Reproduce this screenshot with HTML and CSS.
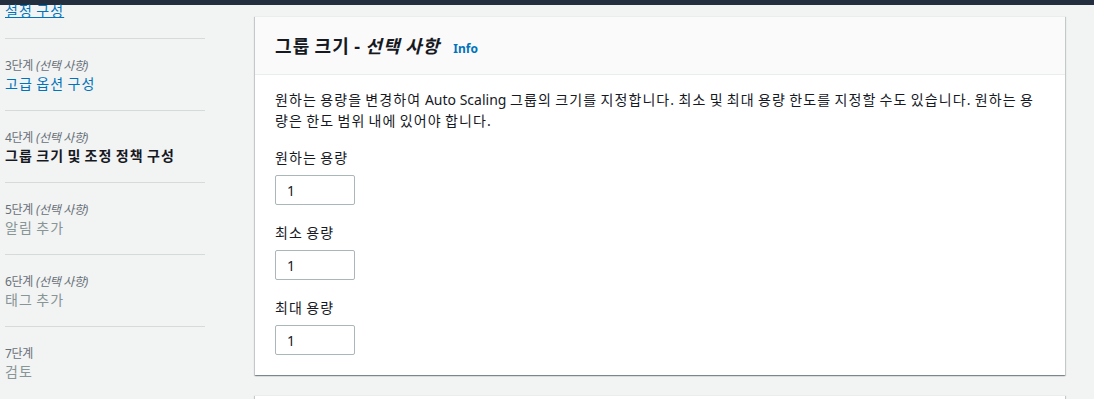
FILE: index.html
```html
<!DOCTYPE html>
<html lang="ko">
<head>
    <meta charset="UTF-8">
    <meta name="viewport" content="width=device-width, initial-scale=1.0">
    <title>Auto Scaling 그룹 생성</title>
    <link rel="stylesheet" href="styles.css">
</head>
<body>
    <div class="topbar"></div>

    <div class="layout">
        <!-- Wizard steps -->
        <nav class="steps">
            <div class="step first">
                <a class="step-link underline" href="#">설정 구성</a>
            </div>
            <div class="step">
                <div class="step-num">3단계 <i>(선택 사항)</i></div>
                <a class="step-link" href="#">고급 옵션 구성</a>
            </div>
            <div class="step">
                <div class="step-num">4단계 <i>(선택 사항)</i></div>
                <div class="step-name current">그룹 크기 및 조정 정책 구성</div>
            </div>
            <div class="step">
                <div class="step-num">5단계 <i>(선택 사항)</i></div>
                <div class="step-name">알림 추가</div>
            </div>
            <div class="step">
                <div class="step-num">6단계 <i>(선택 사항)</i></div>
                <div class="step-name">태그 추가</div>
            </div>
            <div class="step">
                <div class="step-num">7단계</div>
                <div class="step-name">검토</div>
            </div>
        </nav>

        <main class="content">
            <section class="card">
                <div class="card-header">
                    <h2>그룹 크기 - <i>선택 사항</i></h2>
                    <a class="info latin" href="#">Info</a>
                </div>
                <div class="card-body">
                    <p class="desc">원하는 용량을 변경하여<span class="latin"> Auto Scaling </span>그룹의 크기를 지정합니다. 최소 및 최대 용량 한도를 지정할 수도 있습니다. 원하는 용량은 한도 범위 내에 있어야 합니다.</p>

                    <div class="field">
                        <label for="desired">원하는 용량</label>
                        <input type="text" id="desired" value="1">
                    </div>
                    <div class="field">
                        <label for="minSize">최소 용량</label>
                        <input type="text" id="minSize" value="1">
                    </div>
                    <div class="field">
                        <label for="maxSize">최대 용량</label>
                        <input type="text" id="maxSize" value="1">
                    </div>
                </div>
            </section>

            <section class="card next"></section>
        </main>
    </div>
</body>
</html>
```

FILE: styles.css
```css
/* General Styles */
html {
    overflow: hidden;
}
body {
    margin: 0;
    font-family: "Noto Sans", "Noto Sans CJK KR", sans-serif;
    font-size: 14px;
    letter-spacing: 1.1px;
    word-spacing: -1.5px;
    color: #16191f;
    background: #f2f3f3;
    height: 399px;
    overflow: hidden;
}
.latin {
    letter-spacing: 0;
    word-spacing: 0;
}
.topbar {
    height: 5px;
    background: #232f3e;
}
.layout {
    display: flex;
    gap: 50px;
}

/* Step list */
.steps {
    width: 200px;
    margin-left: 5px;
    flex-shrink: 0;
}
.step {
    border-top: 1px solid #d5dbdb;
    padding: 18px 0 16px;
}
.step.first {
    border-top: none;
    margin-top: -4px;
    padding: 0 0 17px;
}
.step-num {
    font-size: 12px;
    line-height: 17px;
    letter-spacing: -0.3px;
    word-spacing: 0;
    color: #687078;
}
.step-num i {
    font-style: italic;
}
.step-link,
.step-name {
    display: block;
    line-height: 20px;
    text-decoration: none;
    color: #0073bb;
}
.step-link.underline {
    display: inline-block;
    text-decoration: underline;
}
.step-name {
    color: #879596;
}
.step-name.current {
    color: #16191f;
    font-weight: bold;
}

/* Card */
.content {
    width: 810px;
    padding-top: 11px;
}
.card {
    background: #fff;
    box-shadow: 0 1px 1px 0 rgba(0, 28, 36, 0.3),
                1px 1px 1px 0 rgba(0, 28, 36, 0.15),
                -1px 1px 1px 0 rgba(0, 28, 36, 0.15);
    border-top: 1px solid #eaeded;
}
.card-header {
    display: flex;
    align-items: baseline;
    gap: 13px;
    background: #fafafa;
    border-bottom: 1px solid #eaeded;
    padding: 18px 20px 17px;
}
.card-header h2 {
    margin: 0;
    font-size: 18px;
    line-height: 22px;
    font-weight: bold;
}
.info {
    font-size: 12px;
    font-weight: bold;
    color: #0073bb;
    text-decoration: none;
}
.card-body {
    padding: 14px 20px 20px;
}
.desc {
    margin: 0 0 17px;
    line-height: 21px;
    word-break: break-all;
}

/* Form fields */
.field {
    display: flex;
    flex-direction: column;
    align-items: flex-start;
    gap: 7px;
    margin-bottom: 18px;
}
.field:last-child {
    margin-bottom: 0;
}
.field label {
    line-height: 20px;
}
.field input {
    box-sizing: border-box;
    width: 80px;
    height: 30px;
    padding: 0 11px;
    font-family: inherit;
    font-size: 14px;
    letter-spacing: 0;
    color: #16191f;
    border: 1px solid #aab7b8;
    border-radius: 2px;
    outline: none;
}
.card.next {
    margin-top: 20px;
    height: 40px;
}
```
